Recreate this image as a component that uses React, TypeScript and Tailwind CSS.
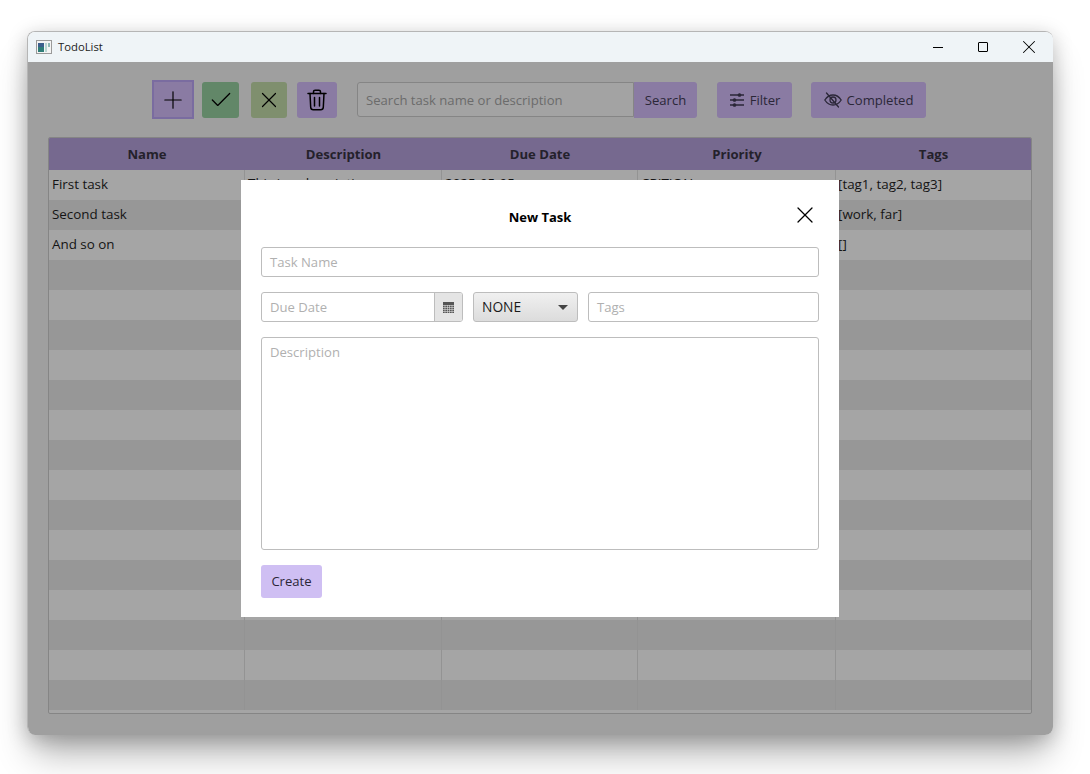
import { Check, Plus, X } from "lucide-react";

const rows = [
  { name: "First task", description: "This is a description", due: "2025-05-05", priority: "CRITICAL", tags: "[tag1, tag2, tag3]" },
  { name: "Second task", description: "", due: "", priority: "", tags: "[work, far]" },
  { name: "And so on", description: "", due: "", priority: "", tags: "[]" },
  ...Array.from({ length: 15 }, () => ({ name: "", description: "", due: "", priority: "", tags: "" })),
];

const columns = ["w-[196px]", "w-[197px]", "w-[196px]", "w-[198px]", "flex-1"];

function AppIcon() {
  return (
    <svg width="16" height="14" viewBox="0 0 16 14">
      <rect x="0.5" y="0.5" width="15" height="13" fill="#f4f4f4" stroke="#9a9a9a" />
      <rect x="2" y="3" width="6" height="9" fill="#2f7d78" />
      <rect x="2" y="3" width="6" height="4" fill="#3c5f8c" />
      <rect x="9" y="3" width="2" height="9" fill="#b9d6d2" />
      <rect x="12" y="3" width="2" height="4" fill="#8fb8b4" />
    </svg>
  );
}

function TrashIcon() {
  return (
    <svg width="20" height="22" viewBox="0 0 20 22" fill="none" stroke="#000" strokeWidth="1.5" strokeLinecap="round" strokeLinejoin="round">
      <path d="M1 4.5h18" />
      <path d="M6.5 4.5V2.8c0-.9.7-1.6 1.6-1.6h3.8c.9 0 1.6.7 1.6 1.6v1.7" />
      <path d="M3 4.5l.7 13.8c.1 1.4 1.2 2.5 2.6 2.5h7.4c1.4 0 2.5-1.1 2.6-2.5L17 4.5" />
      <path d="M7.5 8.5v8.5M12.5 8.5v8.5" />
    </svg>
  );
}

function FilterIcon() {
  return (
    <svg width="16" height="14" viewBox="0 0 16 14" fill="none" stroke="#2b2738" strokeWidth="1.3">
      <path d="M1 2h14M1 7h14M1 12h14" />
      <circle cx="10.5" cy="2" r="1.2" fill="#2b2738" />
      <circle cx="5.5" cy="7" r="1.2" fill="#2b2738" />
      <circle cx="5.5" cy="12" r="1.2" fill="#2b2738" />
    </svg>
  );
}

function EyeOffIcon() {
  return (
    <svg width="18" height="16" viewBox="0 0 18 16" fill="none" stroke="#2b2738" strokeWidth="1.3" strokeLinecap="round">
      <path d="M0.8 8C3 4.600 5.800 3 9 3s6 1.600 8.200 5c-2.200 3.400-5 5-8.200 5S3 11.400.8 8z" />
      <circle cx="9" cy="8" r="3" />
      <path d="M2.500 1l12 14" />
    </svg>
  );
}

function CalendarIcon() {
  return (
    <svg width="11" height="11" viewBox="0 0 11 11">
      <rect width="11" height="11" fill="#555" />
      <path d="M0 3.500h11M0 5.500h11M0 7.500h11M0 9.500h11M2 3v8M4.500 3v8M6.500 3v8M9 3v8" stroke="#ddd" strokeWidth="0.6" />
    </svg>
  );
}

export default function App() {
  return (
    <div className="w-[1090px] h-[774px] bg-white overflow-hidden pt-[31px] pl-[27px] [font-family:'Open_Sans','Noto_Sans',sans-serif] text-[13.1px] text-[#1a1a1a]">
      <div className="relative w-[1026px] h-[704px] rounded-lg overflow-visible shadow-[0_4px_20px_rgba(0,0,0,0.22),0_24px_36px_-6px_rgba(0,0,0,0.3)]">
        <div className="w-full h-full flex flex-col rounded-lg overflow-hidden border border-[#b5b5b5] border-b-0 border-r-0">
          {/* title bar */}
          <div className="h-[30px] shrink-0 bg-[#eff4f7] flex items-center pl-[8px] pr-px">
            <AppIcon />
            <span className="ml-[6px] text-[11.3px] text-[#222]">TodoList</span>
            <div className="ml-auto flex items-center">
              <div className="w-[45px] flex justify-center">
                <div className="w-[10px] h-px bg-black" />
              </div>
              <div className="w-[46px] flex justify-center">
                <div className="w-[10px] h-[10px] border border-black rounded-[1px]" />
              </div>
              <div className="w-[46px] flex justify-center">
                <X size={22} strokeWidth={1.1} color="#000" />
              </div>
            </div>
          </div>

          {/* main area */}
          <div className="flex-1 bg-[#9f9f9f] flex flex-col pl-[20px]">
            <div className="h-[75px] shrink-0 flex items-center pl-[104px]">
              <div className="w-[42px] h-[39px] bg-[#8a7ba3] border-2 border-[#7a6ca0] flex items-center justify-center">
                <Plus size={28} strokeWidth={1} color="#000" />
              </div>
              <div className="ml-[8px] w-[37px] h-[36px] rounded-[3px] bg-[#628768] flex items-center justify-center">
                <Check size={26} strokeWidth={1.2} color="#000" />
              </div>
              <div className="ml-[12px] w-[36px] h-[36px] rounded-[3px] bg-[#7f8f6e] flex items-center justify-center">
                <X size={26} strokeWidth={1.1} color="#000" />
              </div>
              <div className="ml-[10px] w-[40px] h-[36px] rounded-[3px] bg-[#8a7ba3] flex items-center justify-center">
                <TrashIcon />
              </div>
              <div className="ml-[20px] w-[277px] h-[35px] rounded-l-[3px] border border-[#858585] bg-[#a3a3a3] flex items-center pl-[8px] pt-[2px] text-[#6b6b6b]">
                Search task name or description
              </div>
              <div className="w-[63px] h-[36px] rounded-r-[3px] bg-[#8a7ba3] flex items-center justify-center pt-[2px] text-[#2b2738]">
                Search
              </div>
              <div className="ml-[20px] w-[75px] h-[36px] rounded-[3px] bg-[#8a7ba3] flex items-center justify-center gap-[5px] text-[#2b2738]">
                <FilterIcon />
                <span className="pt-[2px]">Filter</span>
              </div>
              <div className="ml-[19px] w-[115px] h-[36px] rounded-[3px] bg-[#8a7ba3] flex items-center justify-center gap-[5px] text-[#2b2738]">
                <EyeOffIcon />
                <span className="pt-[2px]">Completed</span>
              </div>
            </div>

            {/* table */}
            <div className="w-[984px] h-[577px] border border-[#858585] rounded-[2px] overflow-hidden bg-[#a5a5a5] flex flex-col">
              <div className="h-[32px] shrink-0 bg-[#76698f] flex items-center pt-[2px]">
                {["Name", "Description", "Due Date", "Priority", "Tags"].map((title, i) => (
                  <div key={title} className={`${columns[i]} text-center font-bold text-[#24212b]`}>
                    {title}
                  </div>
                ))}
              </div>
              {rows.map((row, r) => (
                <div key={r} className={`h-[30px] shrink-0 flex ${r % 2 === 0 ? "bg-[#a5a5a5]" : "bg-[#979797]"}`}>
                  {[row.name, row.description, row.due, row.priority, row.tags].map((cell, i) => (
                    <div key={i} className={`${columns[i]} ${i < 4 ? "border-r border-[#939393] pl-[3px]" : "pl-[2px]"} ${i > 0 && i < 4 ? "pb-[3px]" : "pb-[1px]"} flex items-center text-[13.4px] text-[#141414]`}>
                      {cell}
                    </div>
                  ))}
                </div>
              ))}
            </div>
          </div>
        </div>

        {/* new task dialog */}
        <div className="absolute left-[214px] top-[149px] w-[598px] h-[437px] bg-white flex flex-col px-[20px] pt-[18px]">
          <div className="relative h-[37px] shrink-0 pt-[2px] flex items-center justify-center font-bold text-black text-[13px]">
            New Task
            <div className="absolute right-0 top-[3px]">
              <X size={28} strokeWidth={1.1} color="#000" />
            </div>
          </div>
          <div className="mt-[12px] h-[30px] shrink-0 border border-[#bdbdbd] rounded-[3px] flex items-center pl-[8px] pt-[1px] text-[#b0b0b0]">
            Task Name
          </div>
          <div className="mt-[15px] h-[30px] shrink-0 flex">
            <div className="w-[202px] flex border border-[#bdbdbd] rounded-[3px] overflow-hidden">
              <div className="flex-1 flex items-center pl-[8px] pt-[1px] text-[#b0b0b0]">Due Date</div>
              <div className="w-[28px] bg-[#e4e4e4] border-l border-[#bdbdbd] flex items-center justify-center">
                <CalendarIcon />
              </div>
            </div>
            <div className="ml-[10px] w-[105px] border border-[#bdbdbd] rounded-[3px] bg-gradient-to-b from-[#f0f0f0] to-[#dcdcdc] flex items-center justify-between pl-[8px] pr-[9px] pt-[1px] text-[13.8px] text-[#1a1a1a]">
              NONE
              <div className="w-0 h-0 border-x-[5px] border-x-transparent border-t-[5px] border-t-[#444]" />
            </div>
            <div className="ml-[10px] flex-1 border border-[#bdbdbd] rounded-[3px] flex items-center pl-[8px] pt-[1px] text-[#b0b0b0]">
              Tags
            </div>
          </div>
          <div className="mt-[15px] h-[213px] shrink-0 border border-[#bdbdbd] rounded-[3px] pl-[8px] pt-[5px] text-[#b0b0b0]">
            Description
          </div>
          <div className="mt-[15px] w-[61px] h-[33px] rounded-[3px] bg-[#cfbff3] flex items-center justify-center pt-[1px] text-[#2b2738]">
            Create
          </div>
        </div>
      </div>
    </div>
  );
}
